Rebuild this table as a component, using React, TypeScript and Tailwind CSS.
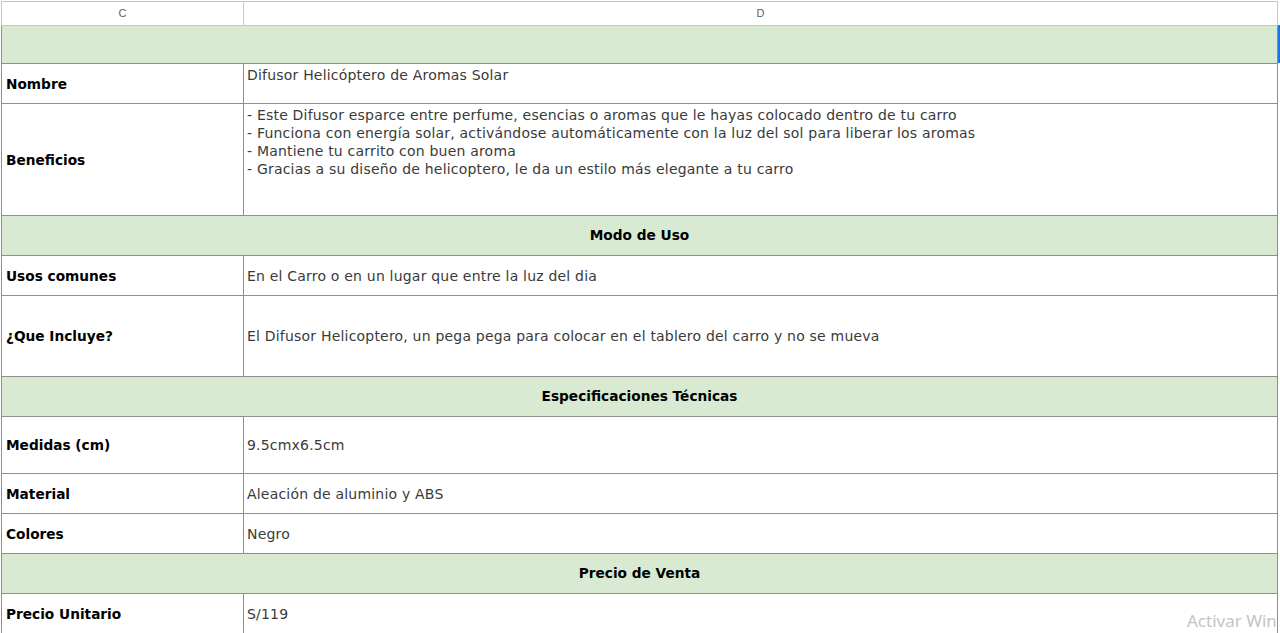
const cellFont = { fontFamily: '"DejaVu Sans", "Open Sans", sans-serif' };

type Row =
    | { kind: "section"; title: string; h: string }
    | { kind: "item"; label: string; lines: string[]; h: string; top?: boolean };

const rows: Row[] = [
    { kind: "section", title: "", h: "h-[38px]" },
    { kind: "item", label: "Nombre", lines: ["Difusor Helicóptero de Aromas Solar"], h: "h-[40px]", top: true },
    {
        kind: "item",
        label: "Beneficios",
        lines: [
            "- Este Difusor esparce entre perfume, esencias o aromas que le hayas colocado dentro de tu carro",
            "- Funciona con energía solar, activándose automáticamente con la luz del sol para liberar los aromas",
            "- Mantiene tu carrito con buen aroma",
            "- Gracias a su diseño de helicoptero, le da un estilo más elegante a tu carro",
        ],
        h: "h-[112px]",
        top: true,
    },
    { kind: "section", title: "Modo de Uso", h: "h-[40px]" },
    { kind: "item", label: "Usos comunes", lines: ["En el Carro o en un lugar que entre la luz del dia"], h: "h-[40px]" },
    {
        kind: "item",
        label: "¿Que Incluye?",
        lines: ["El Difusor Helicoptero, un pega pega para colocar en el tablero del carro y no se mueva"],
        h: "h-[81px]",
    },
    { kind: "section", title: "Especificaciones Técnicas", h: "h-[40px]" },
    { kind: "item", label: "Medidas (cm)", lines: ["9.5cmx6.5cm"], h: "h-[57px]" },
    { kind: "item", label: "Material", lines: ["Aleación de aluminio y ABS"], h: "h-[40px]" },
    { kind: "item", label: "Colores", lines: ["Negro"], h: "h-[40px]" },
    { kind: "section", title: "Precio de Venta", h: "h-[40px]" },
    { kind: "item", label: "Precio Unitario", lines: ["S/119"], h: "h-[40px]" },
];

export default function App() {
    return (
        <div className="relative w-[1280px] h-[633px] overflow-hidden bg-white pt-px pl-px">
            <div className="w-[1277px] flex flex-col">
                {/* Column letters */}
                <div
                    className="flex h-[25px] border-t border-l border-[#c6c6c6] text-[11px] text-[#5f5f5f]"
                    style={{ fontFamily: '"Liberation Sans", Arial, sans-serif' }}
                >
                    <div className="w-[242px] border-r border-b border-[#c6c6c6] flex items-center justify-center">C</div>
                    <div className="flex-1 border-r border-b border-[#c6c6c6] flex items-center justify-center">D</div>
                </div>

                {rows.map((row, i) =>
                    row.kind === "section" ? (
                        <div
                            key={i}
                            className={`${row.h} flex items-center justify-center bg-[#d9ead3] border-l border-r border-b border-[#8e8e8e] text-[13.7px] font-bold text-black`}
                            style={cellFont}
                        >
                            {row.title}
                        </div>
                    ) : (
                        <div key={i} className={`${row.h} flex border-l border-b border-[#8e8e8e]`} style={cellFont}>
                            <div className="w-[242px] border-r border-[#8e8e8e] flex items-center pl-[4px] pt-px text-[13.7px] font-bold text-black">
                                {row.label}
                            </div>
                            <div
                                className={`flex-1 border-r border-[#8e8e8e] flex flex-col pl-[3px] text-[14px] tracking-[0.2px] leading-[18px] text-[#3a3a3a] ${
                                    row.top ? "justify-start pt-[2px]" : "justify-center"
                                }`}
                            >
                                {row.lines.map((line) => (
                                    <div key={line} className="whitespace-nowrap">
                                        {line}
                                    </div>
                                ))}
                            </div>
                        </div>
                    )
                )}
            </div>

            {/* Selection edge */}
            <div className="absolute left-[1278px] top-[25px] w-[2px] h-[38px] bg-[#1a73e8]" />

            {/* Windows watermark */}
            <div
                className="absolute left-[1187px] top-[608px] whitespace-nowrap text-[17px] text-[#c4c4c4]"
                style={{ fontFamily: '"Noto Sans", "Open Sans", sans-serif' }}
            >
                Activar Win
            </div>
        </div>
    );
}
